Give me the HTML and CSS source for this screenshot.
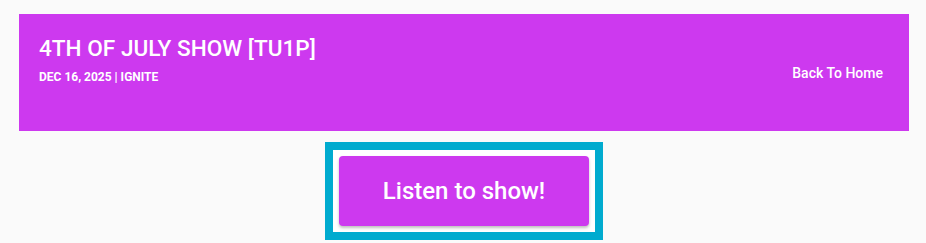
FILE: index.html
```html
<!DOCTYPE html>
<html lang="en">
<head>
    <meta charset="UTF-8">
    <meta name="viewport" content="width=device-width, initial-scale=1.0">
    <title>4th of July Show [TU1P]</title>
    <link rel="stylesheet" href="styles.css">
</head>
<body>
    <div class="show-header">
        <div class="show-info">
            <h1 class="show-title">4th of July Show [TU1P]</h1>
            <div class="show-meta">Dec 16, 2025 | Ignite</div>
        </div>
        <a class="back-link" href="#">Back To Home</a>
    </div>
    <div class="listen-wrap">
        <div class="listen-focus">
            <button class="listen-btn">Listen to show!</button>
        </div>
    </div>
</body>
</html>
```

FILE: styles.css
```css
body {
    margin: 0;
    padding: 14px 17px 0 19px;
    background-color: #fafafa;
    font-family: Roboto, "Liberation Sans", Arial, sans-serif;
}
.show-header {
    display: flex;
    justify-content: space-between;
    height: 117px;
    box-sizing: border-box;
    padding: 22px 26px 0 20px;
    background-color: #cd39ef;
    color: #fff;
}
.show-title {
    margin: 0;
    font-size: 22.6px;
    line-height: 26px;
    font-weight: 500;
    text-transform: uppercase;
}
.show-meta {
    margin-top: 7px;
    font-size: 12px;
    line-height: 16px;
    font-weight: 700;
    text-transform: uppercase;
}
.back-link {
    align-self: center;
    margin-top: -22px;
    color: #fff;
    text-decoration: none;
    font-size: 14px;
    font-weight: 500;
}
.listen-wrap {
    display: flex;
    justify-content: center;
    margin-top: 11px;
    margin-left: -17px;
    margin-right: -17px;
}
.listen-focus {
    border: 8px solid #00abcf;
    padding: 6px;
    background: #fff;
}
.listen-btn {
    display: block;
    width: 250px;
    height: 70px;
    border: none;
    border-radius: 4px;
    background-color: #cd39ef;
    color: #fff;
    font-family: Roboto, "Liberation Sans", Arial, sans-serif;
    font-size: 24px;
    font-weight: 500;
    box-shadow: 0 2px 3px rgba(0, 0, 0, 0.25);
    cursor: pointer;
}
```
